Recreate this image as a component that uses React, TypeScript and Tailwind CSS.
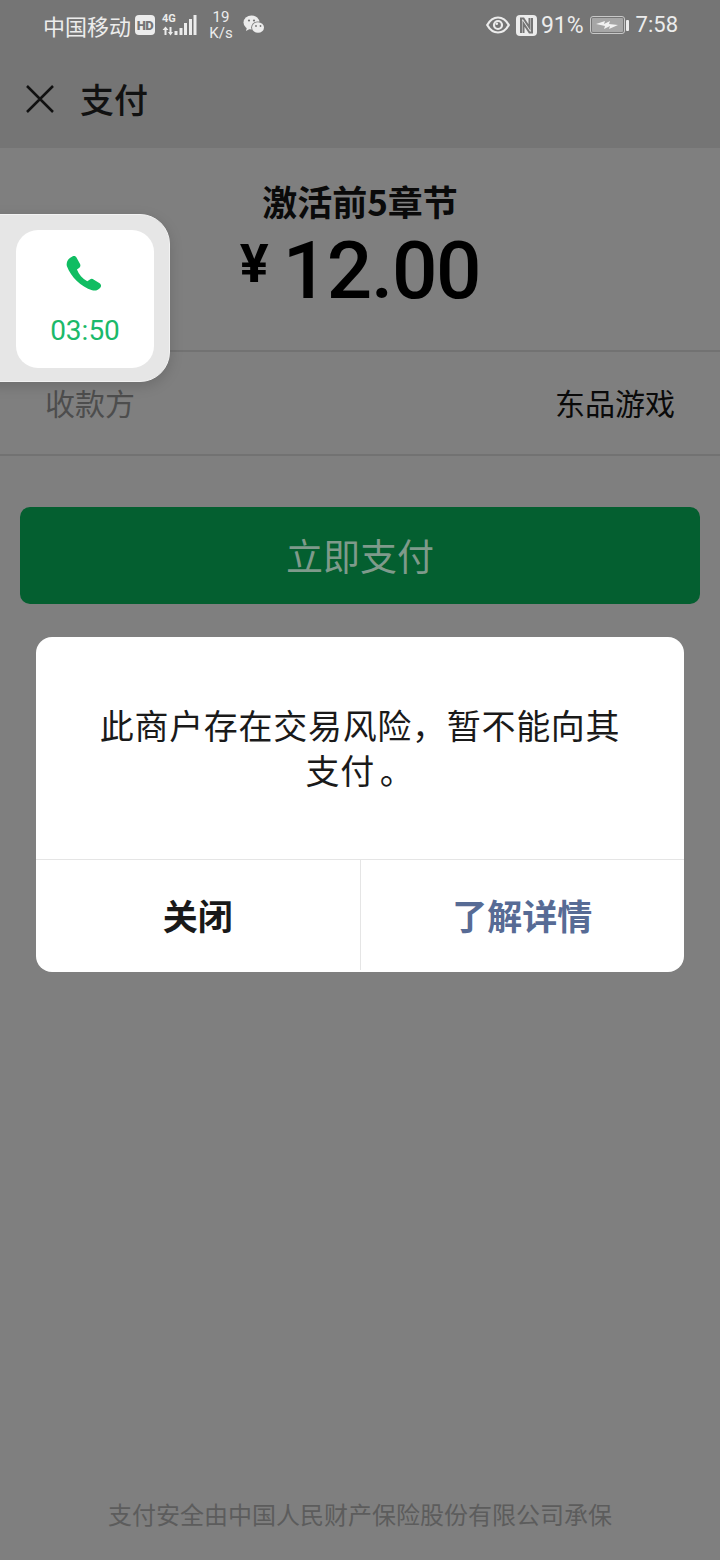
import React from 'react';

const cjk = "font-['Noto_Sans_CJK_SC','Roboto',sans-serif]";

const HdBadge = () => (
  <span className="flex h-[20px] w-[20px] items-center justify-center rounded-[4px] bg-[#ececec] font-['Roboto',sans-serif] text-[13px] leading-none font-black tracking-[-0.5px] text-[#757575]">
    HD
  </span>
);

const Signal = () => (
  <div className="relative h-[22px] w-[36px]">
    <span className="absolute top-[-1px] left-0 font-['Roboto',sans-serif] text-[11px] leading-[11px] font-bold text-[#ececec]">4G</span>
    <svg className="absolute inset-0" width="36" height="22" viewBox="0 0 36 22" fill="#ececec">
      <path d="M2.500 14h2v7h-2zM0.500 16L3.500 12.500 6.500 16zM7.500 13h2v6h-2zM6 18h5l-2.500 3.500z" />
      <rect x="12.500" y="17" width="3" height="4" />
      <rect x="17.500" y="14" width="3" height="7" />
      <rect x="22" y="9" width="3" height="12" />
      <rect x="27" y="5" width="3" height="16" />
      <rect x="31.500" y="1" width="3" height="20" />
    </svg>
  </div>
);

const WeChat = () => (
  <svg width="22" height="20" viewBox="0 0 22 20" fill="#ececec">
    <ellipse cx="8.500" cy="7.500" rx="8" ry="7" />
    <path d="M4 12l-1 4 4.500-2.500z" />
    <ellipse cx="15" cy="12.500" rx="6.800" ry="6" fill="#757575" />
    <ellipse cx="15" cy="12.500" rx="6" ry="5.300" />
    <circle cx="6" cy="5.500" r="1.100" fill="#757575" />
    <circle cx="11" cy="5.500" r="1.100" fill="#757575" />
    <circle cx="13" cy="11" r="0.900" fill="#757575" />
    <circle cx="17.500" cy="11" r="0.900" fill="#757575" />
  </svg>
);

const Eye = () => (
  <svg width="24" height="18" viewBox="0 0 24 18" fill="none" stroke="#ececec" strokeWidth="2.200">
    <path d="M1.200 9C4 4 7.700 1.500 12 1.500S20 4 22.800 9C20 14 16.300 16.500 12 16.500S4 14 1.200 9z" />
    <circle cx="12" cy="9" r="4" />
    <circle cx="10.800" cy="7.800" r="1.300" fill="#ececec" stroke="none" />
  </svg>
);

const Nfc = () => (
  <svg width="21" height="21" viewBox="0 0 21 21">
    <rect width="21" height="21" rx="4" fill="#ececec" />
    <path d="M5 18V3.500h2.500l6 9V3M16 3v14.500h-2.500l-6-9V18" fill="none" stroke="#757575" strokeWidth="2" />
  </svg>
);

const Battery = () => (
  <div className="flex items-center gap-[1px]">
    <div className="flex h-[18px] w-[35px] rounded-[3px] border-[1.500px] border-[#c8c8c8] p-[1px]">
      <div className="flex flex-1 items-center justify-center rounded-[1px] bg-[#a6a6a6]">
        <svg width="24" height="12" viewBox="0 0 24 12" fill="#f2f2f2">
          <path d="M1 5l9-3-1 3 6-3-1 3 9 1-9 4 1-3-6 3 1-3z" />
        </svg>
      </div>
    </div>
    <span className="h-[11px] w-[3px] rounded-[1px] bg-[#ececec]" />
  </div>
);

const PhoneIcon = () => (
  <svg width="38" height="38" viewBox="2 1 33 33" fill="#10bd62">
    <path d="M7.500 1.500c1.400-.8 3-.4 3.700 1l3 5.500c.6 1.100.3 2.300-.6 3.100l-2.100 1.700c1.600 4.200 4.700 7.800 9 10.200l2.300-1.700c1-.7 2.200-.7 3.100 0l5.300 3.300c1.300.9 1.600 2.500.7 3.700-1.700 2.400-4.500 3.200-7.200 2.400C15 27.800 6.300 19.200 2.800 9.900c-.9-3.300.7-6.500 4.700-8.400z" />
  </svg>
);

const App: React.FC = () => {
  return (
    <div className={`relative flex h-[1560px] w-[720px] flex-col overflow-hidden bg-[#7f7f7f] ${cjk}`}>
      {/* top bars share the darker tone */}
      <div className="flex h-[148px] flex-col bg-[#757575]">
        <div className="flex h-[50px] items-center justify-between pr-[42px] pl-[43px] text-[#ececec]">
          <div className="flex items-center">
            <span className="text-[22px] leading-none">中国移动</span>
            <span className="ml-[4px]"><HdBadge /></span>
            <span className="ml-[7px]"><Signal /></span>
            <div className="ml-[10px] flex w-[26px] flex-col items-center font-['Roboto',sans-serif] text-[15px] leading-[16px]">
              <span>19</span>
              <span>K/s</span>
            </div>
            <span className="ml-[9px]"><WeChat /></span>
          </div>
          <div className="flex items-center font-['Roboto',sans-serif] text-[22px] leading-none">
            <Eye />
            <span className="ml-[6px]"><Nfc /></span>
            <span className="ml-[4px] text-[23px]">91%</span>
            <span className="ml-[6px]"><Battery /></span>
            <span className="ml-[7px]">7:58</span>
          </div>
        </div>
        <div className="flex h-[98px] items-center pl-[26px]">
          <svg width="28" height="28" viewBox="0 0 28 28" fill="none" stroke="#111111" strokeWidth="2.500">
            <path d="M1 1l26 26M27 1L1 27" />
          </svg>
          <h1 className="ml-[26px] text-[34px] leading-none font-medium text-[#111111]">支付</h1>
        </div>
      </div>

      <div className="flex h-[204px] flex-col items-center border-b-2 border-[#727272] pt-[33px]">
        <p className="text-[35px] leading-[40px] font-bold text-[#0a0a0a]">激活前5章节</p>
        <div className="mt-[8px] flex items-start font-['Roboto',sans-serif] font-medium text-black">
          <span className="mt-[5px] text-[54px] leading-[60px] font-bold">¥</span>
          <span className="ml-[14px] text-[80px] leading-[84px] tracking-[-1.300px]">12.00</span>
        </div>
      </div>

      <div className="flex h-[104px] items-center justify-between border-b-2 border-[#727272] pr-[45px] pb-[2px] pl-[45px] text-[30px]">
        <span className="text-[#4d4d4d]">收款方</span>
        <span className="text-[#0a0a0a]">东品游戏</span>
      </div>

      <div className="mx-[20px] mt-[51px] flex h-[97px] items-center justify-center rounded-[10px] bg-[#045f30] text-[37px] text-[#7f9a8b]">
        立即支付
      </div>

      <div className="mx-[36px] mt-[33px] flex h-[335px] flex-col overflow-hidden rounded-[16px] bg-white">
        <div className="flex h-[223px] items-center justify-center border-b border-[#e5e5e5] pb-[2px] text-center text-[34px] leading-[45px] tracking-[0.7px] text-[#1a1a1a]">
          <p>
            此商户存在交易风险，暂不能向其
            <br />
            支付<span className="ml-[5px]">。</span>
          </p>
        </div>
        <div className="flex flex-1 pb-[2px] text-[35px] font-bold">
          <button className="flex-1 border-r border-[#e5e5e5] text-[#191919]">关闭</button>
          <button className="flex-1 text-[#576b95]">了解详情</button>
        </div>
      </div>

      <p className="mt-auto pb-[30px] text-center text-[24px] leading-[32px] text-[#5c5c5c]">
        支付安全由中国人民财产保险股份有限公司承保
      </p>

      {/* floating call window, sits over the page at the left edge */}
      <div className="absolute top-[214px] left-[-30px] rounded-[30px] border border-[#f2f2f2] bg-[#e6e6e6] pt-[15px] pr-[15px] pb-[13px] pl-[45px] shadow-[0_4px_14px_rgba(0,0,0,0.15)]">
        <div className="flex h-[138px] w-[138px] flex-col items-center rounded-[22px] bg-white pt-[26px]">
          <PhoneIcon />
          <span className="mt-[20px] font-['Roboto',sans-serif] text-[28px] leading-[34px] text-[#1bb96a]">03:50</span>
        </div>
      </div>
    </div>
  );
};

export default App;
